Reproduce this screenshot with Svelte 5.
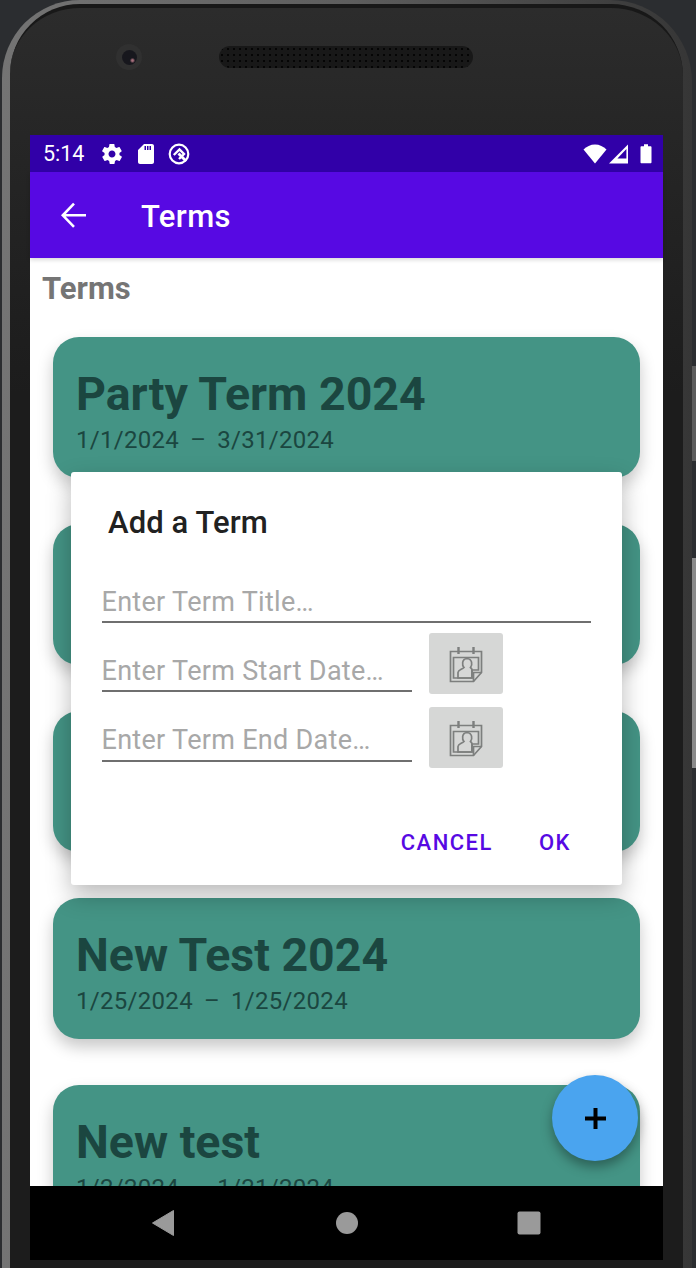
<script>
  const terms = [
    { title: 'Party Term 2024', dates: '1/1/2024', end: '3/31/2024' },
    { title: 'Spring Term 2024', dates: '4/1/2024', end: '6/30/2024' },
    { title: 'Summer Term 2024', dates: '7/1/2024', end: '9/30/2024' },
    { title: 'New Test 2024', dates: '1/25/2024', end: '1/25/2024' },
    { title: 'New test', dates: '1/2/2024', end: '1/21/2024' }
  ];
</script>

<div class="page">
  <div class="sidekey one"></div>
  <div class="sidekey two"></div>
  <div class="phone">
    <div class="bezel">
      <div class="camera"><span></span></div>
      <div class="speaker"></div>
      <div class="screen">
        <div class="statusbar">
          <span class="time">5:14</span>
          <svg class="st" width="24" height="24" viewBox="0 0 24 24"><path fill="#fff" d="M19.4 13c0-.3.1-.6.1-1s0-.7-.1-1l2.100-1.600c.2-.1.2-.4.1-.6l-2-3.500c-.1-.2-.4-.3-.6-.2l-2.500 1c-.5-.4-1.100-.7-1.700-1l-.4-2.700c0-.2-.2-.4-.5-.4h-4c-.2 0-.5.2-.5.4l-.4 2.700c-.6.2-1.100.6-1.700 1l-2.500-1c-.2-.1-.5 0-.6.2l-2 3.500c-.1.2-.1.5.1.6L4.600 11c0 .3-.1.700-.1 1s0 .7.1 1l-2.100 1.600c-.2.100-.2.400-.1.600l2 3.500c.1.200.4.300.6.200l2.500-1c.5.400 1.100.700 1.700 1l.4 2.700c0 .2.2.4.5.4h4c.2 0 .5-.2.5-.4l.4-2.700c.6-.2 1.100-.6 1.700-1l2.500 1c.2.100.5 0 .6-.2l2-3.500c.1-.2.100-.5-.1-.6L19.400 13zM12 15.500c-1.900 0-3.500-1.600-3.500-3.500s1.600-3.500 3.500-3.500 3.500 1.600 3.500 3.500-1.600 3.500-3.500 3.500z"/></svg>
          <svg class="st sd" width="24" height="24" viewBox="0 0 24 24"><path fill="#fff" d="M18 2h-8L4 8v12c0 1.100.9 2 2 2h12c1.100 0 2-.9 2-2V4c0-1.100-.9-2-2-2zm-6 6h-1.500V4H12v4zm2.500 0H13V4h1.500v4zM17 8h-1.500V4H17v4z"/></svg>
          <svg class="st q" width="24" height="24" viewBox="0 0 24 24" fill="none" stroke="#fff"><circle cx="12" cy="12" r="9.300" stroke-width="2.200"/><path d="M6.800 13 12.500 7.500 17 12l-5 5" stroke-width="2.400"/><path d="M11.500 11.500 19 19" stroke-width="2.800"/></svg>
          <span class="spacer"></span>
          <svg class="wifi" width="24" height="20" viewBox="0 0 24 20"><path fill="#fff" d="M0.500 5.500C3.500 2.500 7.500 0.500 12 0.500s8.500 2 11.500 5L12 19.500z"/></svg>
          <svg class="signal" width="20" height="20" viewBox="0 0 20 20"><path fill="#fff" fill-rule="evenodd" d="M0 19.500 19 .5v19zM17.400 5l-9 9.500h9z"/></svg>
          <svg class="battery" width="12" height="20" viewBox="0 0 12 20"><path fill="#fff" d="M1.500 2.200H4V.3h4v1.900h2.500c.5 0 1 .4 1 1v15c0 .6-.5 1-1 1h-9c-.5 0-1-.4-1-1v-15c0-.6.5-1 1-1z"/></svg>
        </div>
        <div class="appbar">
          <svg class="back" width="28" height="28" viewBox="0 0 28 28" fill="none" stroke="#fff" stroke-width="2.600"><path d="M26 14.300H3M14 2.700 2.800 14.300 14 25.800"/></svg>
          <span class="apptitle">Terms</span>
        </div>
        <div class="content">
          <h2>Terms</h2>
          <div class="list">
            {#each terms as t}
              <div class="card">
                <div class="ctitle">{t.title}</div>
                <div class="cdates"><span>{t.dates}</span><span class="dash">–</span><span>{t.end}</span></div>
              </div>
            {/each}
          </div>

          <div class="dialog">
            <div class="dtitle">Add a Term</div>
            <div class="field full">Enter Term Title…</div>
            <div class="drow">
              <div class="field">Enter Term Start Date…</div>
              <div class="calbtn">{@render cal()}</div>
            </div>
            <div class="drow second">
              <div class="field">Enter Term End Date…</div>
              <div class="calbtn">{@render cal()}</div>
            </div>
            <div class="actions">
              <span>CANCEL</span>
              <span>OK</span>
            </div>
          </div>

          <div class="fab">
            <svg width="21" height="21" viewBox="0 0 21 21"><path d="M8.500 0h4v8.500H21v4h-8.500V21h-4v-8.500H0v-4h8.500z" fill="#000"/></svg>
          </div>
        </div>
        <div class="navbar">
          <svg width="24" height="28" viewBox="1 0 24 28"><path d="M22.500 1.500v25L1.500 14z" fill="#9a9a9a" stroke="#9a9a9a" stroke-width="1" stroke-linejoin="round"/></svg>
          <svg width="24" height="24" viewBox="0 0 24 24"><circle cx="12" cy="12" r="11" fill="#9a9a9a"/></svg>
          <svg width="24" height="24" viewBox="0 0 24 24"><rect x="0.500" y="0.500" width="23" height="23" rx="2" fill="#9a9a9a"/></svg>
        </div>
      </div>
    </div>
  </div>
</div>

{#snippet cal()}
  <svg width="34" height="38" viewBox="0 0 34 38" fill="none" stroke="#7d7f7e" stroke-width="1.700">
    <path d="M1.500 6.500h31v21l-8 9h-23z"/>
    <path d="M32.500 27.500h-8v9"/>
    <path d="M9.500 2v7M24.500 2v7" stroke-width="2.400"/>
    <path d="M4.500 12.500h25v12.500h-6.500v8H4.500z"/>
    <path d="M9 33v-5.500c0-2.500 4-3 6-5-2-2-2.500-8.500 3-9 5.500.5 5.500 6.500 3.500 9 1 .8 1.500 1.200 1.500 2.500V33z"/>
  </svg>
{/snippet}

<style>
  :global(body) {
    margin: 0;
    background: #2b2d30;
  }
  .page {
    position: relative;
    width: 696px;
    height: 1268px;
    overflow: hidden;
    background: #2b2d30;
    font-family: Roboto, "Liberation Sans", sans-serif;
  }
  .sidekey {
    position: absolute;
    left: 692px;
    width: 4px;
    background: #5c5c5c;
  }
  .sidekey.one { top: 366px; height: 95px; }
  .sidekey.two { top: 558px; height: 210px; background: #8a8a8a; }
  .phone {
    box-sizing: border-box;
    width: 690px;
    height: 1290px;
    margin-left: 2px;
    padding: 4px 9px 0 8px;
    border-radius: 78px 82px 0 0;
    background: linear-gradient(90deg, #747474 0, #5e5e5e 50%, #363636 100%);
  }
  .bezel {
    position: relative;
    box-sizing: border-box;
    height: 1290px;
    padding: 127px 20px 0 20px;
    border-radius: 70px 72px 0 0;
    border-top: 4px solid #181818;
    background: linear-gradient(180deg, #2c2c2c, #262626 10%, #1c1c1c 30%);
  }
  .camera {
    position: absolute;
    left: 106px;
    top: 36px;
    width: 26px;
    height: 26px;
    border-radius: 50%;
    background: #303030;
    display: grid;
    place-items: center;
  }
  .camera span {
    width: 15px;
    height: 15px;
    border-radius: 50%;
    background: radial-gradient(circle at 70% 70%, #a8707c 0, #a8707c 5%, #17171d 18%);
  }
  .speaker {
    position: absolute;
    left: 209px;
    top: 38px;
    width: 254px;
    height: 22px;
    border-radius: 11px;
    background-color: #181818;
    background-image: radial-gradient(#050505 1px, transparent 1.400px);
    background-size: 6px 6px;
  }
  .screen {
    width: 633px;
    height: 1125px;
    display: flex;
    flex-direction: column;
    background: #fff;
  }
  .statusbar {
    flex: 0 0 37px;
    display: flex;
    align-items: center;
    background: #3100a8;
    color: #fff;
    padding-left: 13px;
    padding-right: 11px;
  }
  .time {
    font-size: 21.500px;
    width: 57px;
  }
  .st { flex: none; }
  .sd { margin-left: 10px; }
  .q { margin-left: 9px; }
  .spacer { flex: 1; }
  .wifi { margin-right: 2px; }
  .signal { margin-right: 11px; }
  .appbar {
    flex: 0 0 86px;
    display: flex;
    align-items: center;
    background: #5709e3;
    color: #fff;
    box-shadow: 0 2px 4px rgba(0, 0, 0, .15);
    position: relative;
    z-index: 1;
  }
  .back { margin-left: 30px; }
  .apptitle {
    margin-left: 53px;
    padding-top: 2px;
    font-size: 31px;
    font-weight: 500;
    letter-spacing: .4px;
  }
  .content {
    position: relative;
    flex: 1;
    min-height: 0;
    overflow: hidden;
    background: #fff;
  }
  h2 {
    margin: 0;
    padding: 13px 0 0 12px;
    font-size: 31px;
    line-height: 36px;
    font-weight: 700;
    color: #757575;
  }
  .list {
    display: flex;
    flex-direction: column;
    gap: 46px;
    padding: 30px 23px 0;
  }
  .card {
    flex: none;
    box-sizing: border-box;
    height: 141px;
    padding: 27px 23px 0;
    border-radius: 26px;
    background: #449485;
    box-shadow: 0 8px 16px rgba(0, 0, 0, .22);
    color: #1b4640;
  }
  .ctitle {
    font-size: 46.500px;
    line-height: 60px;
    font-weight: 700;
    white-space: nowrap;
  }
  .cdates {
    display: flex;
    gap: 11px;
    font-size: 24px;
    line-height: 32px;
    letter-spacing: .3px;
  }
  .dialog {
    position: absolute;
    left: 41px;
    top: 214px;
    box-sizing: border-box;
    width: 551px;
    height: 413px;
    padding: 0 31px;
    border-radius: 3px;
    background: #fff;
    box-shadow: 0 10px 24px rgba(0, 0, 0, .28);
  }
  .dtitle {
    padding: 31px 0 0 6px;
    font-size: 31px;
    line-height: 39px;
    font-weight: 500;
    letter-spacing: .1px;
    color: #212121;
  }
  .field {
    box-sizing: border-box;
    width: 310px;
    height: 40px;
    border-bottom: 2px solid #6f6f6f;
    color: #a8a8a8;
    font-size: 27px;
    line-height: 38px;
    letter-spacing: .3px;
    text-indent: -.5px;
    white-space: nowrap;
    overflow: hidden;
  }
  .full {
    width: 489px;
    margin-top: 40px;
    height: 41px;
    line-height: 40px;
  }
  .drow {
    display: flex;
    align-items: flex-start;
    gap: 17px;
    margin-top: 10px;
    height: 61px;
  }
  .drow .field { margin-top: 19px; }
  .drow.second { margin-top: 13px; }
  .drow.second .field { margin-top: 15px; line-height: 36px; }
  .calbtn {
    flex: none;
    width: 74px;
    height: 61px;
    border-radius: 3px;
    background: #d6d7d6;
    display: grid;
    place-items: center;
  }
  .actions {
    display: flex;
    justify-content: flex-end;
    gap: 46px;
    margin-top: 60px;
    margin-right: 20px;
    color: #5709e3;
    font-size: 22px;
    line-height: 30px;
    font-weight: 500;
    letter-spacing: 1.500px;
  }
  .fab {
    position: absolute;
    left: 522px;
    top: 817px;
    width: 86px;
    height: 86px;
    border-radius: 50%;
    background: #4aa4ef;
    box-shadow: 0 6px 12px rgba(0, 0, 0, .35);
    display: grid;
    place-items: center;
  }
  .navbar {
    flex: 0 0 74px;
    display: flex;
    align-items: center;
    padding: 0 122px;
    justify-content: space-between;
    background: #000;
    position: relative;
    z-index: 2;
  }
</style>
